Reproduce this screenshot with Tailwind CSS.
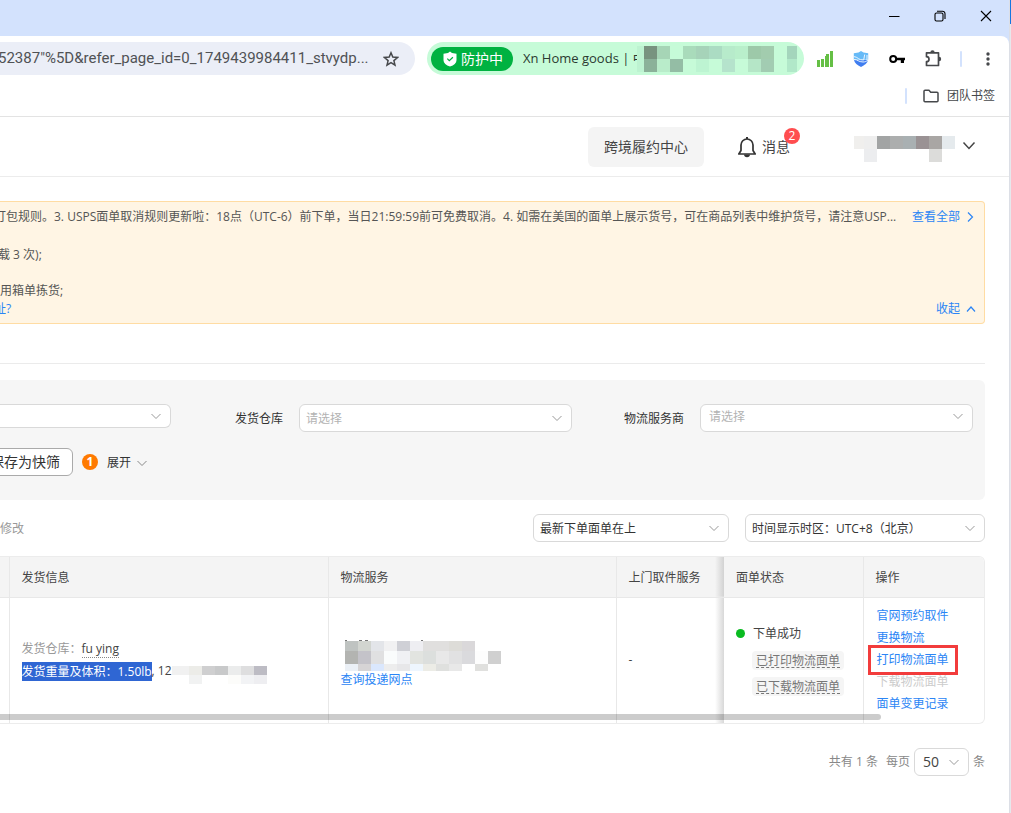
<!DOCTYPE html>
<html lang="zh-CN">
<head>
<meta charset="utf-8">
<meta name="viewport" content="width=device-width, initial-scale=1">
<title>物流面单管理</title>
<script src="https://cdn.jsdelivr.net/npm/@tailwindcss/browser@4"></script>
</head>
<body class="min-h-screen flex overflow-x-hidden bg-[#d3e2fd] text-xs text-[#444] font-['Open_Sans','Noto_Sans_CJK_SC',sans-serif]">

<div class="flex-1 min-w-0 flex flex-col overflow-hidden">
  <!-- Window title bar -->
  <div class="h-9 flex justify-end items-center pr-4 pb-1 gap-8 text-black">
    <button aria-label="最小化" class="w-3.5 h-3.5 flex items-center justify-center"><svg class="w-3 h-3" viewBox="0 0 12 12" stroke="currentColor"><path d="M1 6.500h10.500"/></svg></button>
    <button aria-label="还原" class="w-3.5 h-3.5"><svg class="w-3.5 h-3.5" viewBox="0 0 14 14" fill="none" stroke="currentColor" stroke-width="1.100"><rect x="2" y="4" width="8" height="8" rx="1.500"/><path d="M4 2.200h5.500a2.500 2.500 0 0 1 2.500 2.500V10"/></svg></button>
    <button aria-label="关闭" class="w-3.5 h-3.5"><svg class="w-3.5 h-3.5" viewBox="0 0 14 14" stroke="currentColor" stroke-width="1.100"><path d="M2 2l10 10M12 2L2 12"/></svg></button>
  </div>

  <div class="flex-1 bg-white rounded-tr-lg flex flex-col">
    <!-- Address bar -->
    <div class="flex items-center pt-1.5 pr-[13px]">
      <div class="flex-1 min-w-0 h-[33px] flex items-center bg-[#ebeef7] rounded-r-full pr-4">
        <input aria-label="地址栏" type="text" value="52387&quot;%5D&amp;refer_page_id=0_1749439984411_stvydp..." class="flex-1 min-w-0 -ml-0.5 bg-transparent font-[Roboto] text-[15px] text-[#505255] outline-none">
        <button aria-label="收藏" class="w-4 h-4"><svg class="w-4 h-4" viewBox="0 0 16 16" fill="none" stroke="#46484b" stroke-width="1.500"><path d="M8 1.800l1.800 4.300 4.700.4-3.600 3.100 1.100 4.600L8 11.700l-4 2.500 1.100-4.600L1.500 6.500l4.700-.4z"/></svg></button>
      </div>
      <div class="ml-3 h-[33px] w-[377px] flex items-center bg-[#c6fbd8] rounded-full pl-1">
        <span class="h-6 w-[82px] flex items-center pl-3 gap-1 rounded-full bg-[#00b241] text-white text-sm shrink-0">
          <svg class="w-3.5 h-4 shrink-0" viewBox="0 0 14 16"><path fill="#fff" d="M7 .5l2 1.500 4.500.8v6.400C13.500 12 11 14.200 7 15.600 3 14.200.5 12 .5 9.200V2.800L5 2z"/><path d="M4.300 7.600l2 2 3.600-3.400" fill="none" stroke="#00b241" stroke-width="1.200"/></svg>
          防护中</span>
        <span class="ml-2.5 w-[114px] overflow-hidden whitespace-nowrap text-[13px] text-[#2b3a30]">Xn Home goods | 中</span>
        <svg class="w-40 h-[26px] shrink-0" viewBox="0 0 160 26" shape-rendering="crispEdges">
          <path fill="#bdf3d1" d="M0 0h7v26H0z"/>
          <path fill="#78937f" d="M7 0h13v13H7z"/><path fill="#a6d5b6" d="M20 0h13v13H20z"/><path fill="#a9dbbb" d="M46 0h13v13H46z"/><path fill="#a6d3b9" d="M59 0h13v13H59z"/><path fill="#abdcc3" d="M72 0h13v13H72z"/><path fill="#b7ebcb" d="M85 0h13v13H85z"/><path fill="#b9efcb" d="M98 0h13v13H98z"/><path fill="#9dc9a9" d="M111 0h13v13h-13z"/><path fill="#a2ccae" d="M124 0h13v13h-13z"/><path fill="#a4d5bc" d="M150 0h10v13h-10z"/>
          <path fill="#8bb199" d="M7 13h13v13H7z"/><path fill="#b9ecca" d="M20 13h13v13H20z"/><path fill="#94bda5" d="M33 13h13v13H33z"/><path fill="#bdf4d2" d="M59 13h13v13H59z"/><path fill="#b5e3cc" d="M85 13h13v13H85z"/><path fill="#b5e6c7" d="M111 13h13v13h-13z"/><path fill="#a2ccb2" d="M124 13h13v13h-13z"/><path fill="#b1e8c9" d="M150 13h10v13h-10z"/>
        </svg>
      </div>
      <div class="ml-3 flex items-center gap-[18px]">
        <button aria-label="信号" class="w-[18px] h-[18px]"><svg class="w-[18px] h-[18px]" viewBox="0 0 18 18" fill="#65bf45"><path d="M1 10h3v7H1zM5 9h3v8H5zM9 6h2.500v11H9zM10 4h3v13h-3zM14 1h3v16h-3z"/></svg></button>
        <button aria-label="安全防护" class="w-[18px] h-[18px]"><svg class="w-[18px] h-[18px]" viewBox="0 0 18 18"><path fill="#66baf7" d="M9 1l2.500 1.600 4.700.6v6.500H1.800V3.200l4.700-.6z"/><path fill="#3f7df0" d="M2 10h14c-.7 3.200-3.200 5.200-7 7-3.800-1.800-6.300-3.800-7-7z"/><path d="M1.500 6.500c4.500.2 5 4 10.200 3.500l1-5.500M2 9.500c3.500-.2 4.500 2.500 9 2.500 2.200 0 3.500-.7 5-2M15 5v5" fill="none" stroke="#e9f5ff" stroke-width="1"/></svg></button>
        <button aria-label="密码" class="w-[18px] h-[18px]"><svg class="w-[18px] h-[18px]" viewBox="0 0 18 18"><circle cx="5.200" cy="9" r="3" fill="none" stroke="#000" stroke-width="2"/><path fill="#000" d="M8.500 7.700H17v2.600h-1V13h-3.200v-2.700H8.500z"/></svg></button>
        <button aria-label="扩展程序" class="w-[18px] h-[18px]"><svg class="w-[18px] h-[18px]" viewBox="0 0 18 18"><path fill="none" stroke="#46484b" stroke-width="1.700" stroke-linejoin="round" d="M2.500 2.800h12v12.700h-12v-3.800a2.500 2.500 0 0 0 0-5z"/><path fill="#46484b" d="M6.300 2.500a2.200 2.200 0 0 1 4.400 0zM15 6.800a2.200 2.200 0 0 1 0 4.400z"/></svg></button>
        <span class="w-0.5 h-4 bg-[#d3e2fd] rounded"></span>
        <button aria-label="菜单" class="w-4 h-4"><svg class="w-4 h-4" viewBox="0 0 16 16" fill="#46484b"><circle cx="8" cy="3" r="1.700"/><circle cx="8" cy="8" r="1.700"/><circle cx="8" cy="13" r="1.700"/></svg></button>
      </div>
    </div>

    <!-- Bookmarks bar -->
    <div class="h-[42px] border-b border-[#e3e3e3] flex items-center justify-end pr-3.5">
      <span class="w-0.5 h-4 bg-[#d3e2fd] rounded mr-4"></span>
      <a href="#" class="flex items-center gap-2 text-[#46484b]">
        <svg class="w-4 h-4" viewBox="0 0 16 16" fill="none" stroke="currentColor" stroke-width="1.500" stroke-linejoin="round"><path d="M1 12.800V3.200q0-1 1-1h4l1.700 2H14q1 0 1 1v7.600q0 1-1 1H2q-1 0-1-1z"/></svg>
        团队书签</a>
    </div>

    <!-- Site header -->
    <header class="h-[60px] border-b border-[#ececec] flex items-center justify-end pr-8 text-sm">
      <button class="h-10 px-4 rounded-md bg-[#f4f4f4] text-[#444]">跨境履约中心</button>
      <button class="relative ml-8 flex items-center gap-1 text-[#444]">
        <svg class="w-[22px] h-[22px]" viewBox="0 0 22 22" fill="none" stroke="#333" stroke-width="1.700" stroke-linejoin="round"><path d="M11 3a6 6 0 0 0-6 6v5.500L2.800 18h16.400L17 14.500V9a6 6 0 0 0-6-6z"/><path d="M11 1v2" stroke-width="2"/><path d="M8 18.500h6c0 1.500-1.200 2.700-3 2.700s-3-1.200-3-2.700z" fill="#333" stroke="none"/></svg>
        消息
        <span class="absolute -top-2 -right-2.5 w-4 h-4 rounded-full bg-[#ff4d4f] text-white text-xs leading-4 text-center">2</span>
      </button>
      <button aria-label="账号菜单" class="ml-16 flex items-center gap-1.5">
        <svg class="w-[101px] h-[26px] translate-y-0.5" viewBox="0 0 101 26" shape-rendering="crispEdges">
          <path fill="#f0efed" d="M0 0h10v13H0z"/><path fill="#eee" d="M10 0h13v13H10z"/><path fill="#a2a4a4" d="M23 0h13v13H23z"/><path fill="#acaeae" d="M36 0h13v13H36z"/><path fill="#a9b0b2" d="M49 0h13v13H49z"/><path fill="#9a9294" d="M62 0h13v13H62z"/><path fill="#a9a6a4" d="M75 0h13v13H75z"/><path fill="#e5eaed" d="M88 0h13v13H88z"/><path fill="#ecedef" d="M10 13h13v13H10z"/><path fill="#dcdcda" d="M75 13h13v13H75z"/>
        </svg>
        <svg class="w-4 h-4" viewBox="0 0 16 16" fill="none" stroke="#444" stroke-width="1.500"><path d="M2.500 3.500L8 9.500l5.500-6"/></svg>
      </button>
    </header>

    <main class="pr-6 pt-6">
      <!-- Notice -->
      <section class="border border-l-0 border-[#ffdca3] bg-[#fff5e4] rounded-r pt-1.5 pb-[5px] pr-2 text-[#555] leading-[18px]">
        <div class="flex items-center whitespace-nowrap pb-0.5">
          <p class="flex-1 min-w-0 overflow-hidden"><span class="block -ml-1.5">打包规则。3. USPS面单取消规则更新啦：18点（UTC-6）前下单，当日21:59:59前可免费取消。4. 如需在美国的面单上展示货号，可在商品列表中维护货号，请注意USP...</span></p>
          <a href="#" class="ml-3 flex items-center gap-1 text-[#2b85f5]">查看全部
            <svg class="w-3 h-3" viewBox="0 0 12 12" fill="none" stroke="currentColor" stroke-width="1.200"><path d="M4 1.500L8.500 6 4 10.500"/></svg></a>
        </div>
        <p class="mt-[18px] -ml-0.5">载 3 次);</p>
        <p class="mt-[18px]">用箱单拣货;</p>
        <div class="flex justify-between">
          <a href="#" class="-ml-1.5 text-[#2b85f5]">址?</a>
          <button class="flex items-center gap-1.5 text-[#2b85f5]">收起
            <svg class="w-2.5 h-2.5" viewBox="0 0 10 10" fill="none" stroke="currentColor" stroke-width="1.200"><path d="M1 7.500l4-4.500 4 4.500"/></svg></button>
        </div>
      </section>

      <div class="mt-[39px] h-px bg-[#ebebeb]"></div>

      <!-- Filters -->
      <form class="mt-4 bg-[#f6f6f6] rounded-r-md py-6 pr-3">
        <div class="grid grid-cols-[171px_1fr_1fr] items-start text-[#333]">
          <div class="relative">
            <select aria-label="筛选条件" class="appearance-none block w-full h-6 rounded-r-md border border-l-0 border-[#d9d9d9] bg-white"><option></option></select>
            <svg class="pointer-events-none absolute right-2.5 top-1.5 w-2.5 h-3" viewBox="0 0 10 12" fill="none" stroke="#999"><path d="M.5 4L5 8.500 9.500 4"/></svg>
          </div>
          <div class="flex items-center">
            <label for="warehouse" class="w-32 pr-4 pt-0.5 text-right">发货仓库</label>
            <div class="relative flex-1">
              <select id="warehouse" class="appearance-none block w-full h-7 px-1.5 pt-0.5 rounded-md border border-[#d9d9d9] bg-white text-[#b3b3b3]"><option>请选择</option></select>
              <svg class="pointer-events-none absolute right-2.5 top-2 w-2.5 h-3" viewBox="0 0 10 12" fill="none" stroke="#999"><path d="M.5 4L5 8.500 9.500 4"/></svg>
            </div>
          </div>
          <div class="flex items-center">
            <label for="carrier" class="w-32 pr-4 pt-0.5 text-right">物流服务商</label>
            <div class="relative flex-1">
              <select id="carrier" class="appearance-none block w-full h-7 px-2 pb-0.5 rounded-md border border-[#d9d9d9] bg-white text-[#b3b3b3]"><option>请选择</option></select>
              <svg class="pointer-events-none absolute right-2.5 top-1.5 w-2.5 h-3" viewBox="0 0 10 12" fill="none" stroke="#999"><path d="M.5 4L5 8.500 9.500 4"/></svg>
            </div>
          </div>
        </div>
        <div class="mt-4 flex items-center text-[#333]">
          <div class="w-[73px] flex justify-end overflow-hidden shrink-0">
            <button type="button" class="h-7 px-3 shrink-0 rounded-md border border-[#aaa] bg-white text-sm whitespace-nowrap">保存为快筛</button>
          </div>
          <span class="ml-[9px] w-4 h-4 rounded-full bg-[#ff7a00] text-white text-xs leading-4 font-bold text-center">1</span>
          <button type="button" class="ml-[9px] pt-0.5 flex items-center gap-1.5">展开
            <svg class="w-2.5 h-3" viewBox="0 0 10 12" fill="none" stroke="#888"><path d="M.5 4L5 8.500 9.500 4"/></svg></button>
        </div>
      </form>

      <!-- List toolbar -->
      <div class="mt-3.5 flex items-center gap-4 text-[#333]">
        <span class="mr-auto pt-0.5 text-[#999]">修改</span>
        <div class="relative w-[196px]">
          <select aria-label="排序" class="appearance-none block w-full h-7 px-1.5 pt-0.5 rounded-md border border-[#d9d9d9] bg-white"><option>最新下单面单在上</option></select>
          <svg class="pointer-events-none absolute right-2.5 top-2 w-2.5 h-3" viewBox="0 0 10 12" fill="none" stroke="#999"><path d="M.5 4L5 8.500 9.500 4"/></svg>
        </div>
        <div class="relative w-60">
          <select aria-label="时区" class="appearance-none block w-full h-7 px-1.5 pt-0.5 rounded-md border border-[#d9d9d9] bg-white"><option>时间显示时区：UTC+8（北京）</option></select>
          <svg class="pointer-events-none absolute right-2.5 top-2 w-2.5 h-3" viewBox="0 0 10 12" fill="none" stroke="#999"><path d="M.5 4L5 8.500 9.500 4"/></svg>
        </div>
      </div>

      <!-- Orders -->
      <div class="relative mt-3.5 border border-l-0 border-[#ececec] rounded-r-md overflow-hidden">
        <table class="w-full table-fixed border-collapse text-left">
          <colgroup><col class="w-[9px]"><col class="w-[319px]"><col><col class="w-[108px]"><col class="w-[139px]"><col class="w-[121px]"></colgroup>
          <thead>
            <tr class="h-10 bg-[#f4f4f4] border-b border-[#e8e8e8] text-[#444]">
              <td class="border-r border-[#e8e8e8]"></td>
              <th class="px-3 pt-0.5 font-normal border-r border-[#e8e8e8]">发货信息</th>
              <th class="px-3 pt-0.5 font-normal border-r border-[#e8e8e8]">物流服务</th>
              <th class="px-3 pt-0.5 font-normal bg-linear-to-l from-[#d2d2d2] to-transparent bg-[length:9px_100%] bg-right bg-no-repeat">上门取件服务</th>
              <th class="px-3 pt-0.5 font-normal border-r border-[#e8e8e8]">面单状态</th>
              <th class="px-3 pt-0.5 font-normal">操作</th>
            </tr>
          </thead>
          <tbody>
            <tr class="h-[126px]">
              <td class="border-r border-[#e8e8e8]"></td>
              <td class="px-3 border-r border-[#e8e8e8] leading-[22px]">
                <div class="text-[#999]">发货仓库：<span class="text-[#444] border-b border-dotted border-[#888]">fu ying</span></div>
                <div class="flex items-center whitespace-nowrap"><span class="bg-[#2f66d3] text-white leading-[19px]">发货重量及体积：1.50lb</span><span>, 12</span>
                  <svg class="w-[95px] h-[18px] translate-y-1" viewBox="0 0 95 18" shape-rendering="crispEdges">
                    <path fill="#f1f1f1" d="M0 0h17v9H0z"/><path fill="#ecece8" d="M17 0h13v9H17z"/><path fill="#cfcfd0" d="M30 0h13v9H30z"/><path fill="#c8c9ca" d="M43 0h13v9H43z"/><path fill="#ebecec" d="M56 0h13v9H56z"/><path fill="#dededf" d="M69 0h13v9H69z"/><path fill="#bdbcc4" d="M82 0h13v9H82z"/><path fill="#f1f2f2" d="M17 9h13v9H17z"/><path fill="#fcfcfa" d="M56 9h13v9H56z"/><path fill="#f2f3f5" d="M69 9h13v9H69z"/><path fill="#eeeef1" d="M82 9h13v9H82z"/>
                  </svg>
                </div>
              </td>
              <td class="px-3 pt-2 border-r border-[#e8e8e8]">
                <svg class="ml-1 w-[156px] h-[31px]" viewBox="0 0 156 31" shape-rendering="crispEdges">
                  <path fill="#777" d="M0 0h2v1H0zM14 0h3v1h-3zM20 0h3v1h-3zM76 0h2v1h-2z"/>
                  <path fill="#bfc3c1" d="M0 1h13v10H0z"/><path fill="#d2d5d0" d="M13 1h13v10H13z"/><path fill="#e3e5e9" d="M26 1h13v10H26z"/><path fill="#f1f1f2" d="M39 1h13v10H39z"/><path fill="#cfd0d6" d="M52 1h13v10H52z"/><path fill="#eeeef2" d="M65 1h13v10H65z"/><path fill="#e0dfde" d="M78 1h26v10H78z"/><path fill="#dddcd8" d="M104 1h13v10h-13z"/><path fill="#dad8da" d="M117 1h13v10h-13z"/>
                  <path fill="#b3b4b1" d="M0 11h13v13H0z"/><path fill="#c4c3c9" d="M13 11h13v13H13z"/><path fill="#e0e0e1" d="M26 11h13v13H26z"/><path fill="#fafcfc" d="M39 11h13v13H39z"/><path fill="#f0f1f4" d="M52 11h13v13H52z"/><path fill="#e2e4e0" d="M65 11h13v13H65z"/><path fill="#dcdfdd" d="M78 11h13v13H78z"/><path fill="#e8e8e8" d="M91 11h13v13H91z"/><path fill="#e1e1e2" d="M104 11h13v13h-13z"/><path fill="#dadadd" d="M117 11h13v13h-13z"/><path fill="#fdfdfd" d="M130 11h13v13h-13z"/><path fill="#d0d0d0" d="M143 11h13v13h-13z"/>
                  <path fill="#ebf0f6" d="M0 24h13v7H0z"/><path fill="#d6d4d5" d="M13 24h13v7H13z"/><path fill="#dae7fd" d="M26 24h13v7H26z"/><path fill="#ededed" d="M39 24h13v7H39z"/><path fill="#e7e7e9" d="M52 24h13v7H52z"/><path fill="#eef6fe" d="M65 24h13v7H65z"/><path fill="#ecece6" d="M78 24h13v7H78z"/><path fill="#dfe0de" d="M91 24h13v7H91z"/><path fill="#e8e8e8" d="M104 24h13v7h-13z"/><path fill="#e0e0de" d="M130 24h13v7h-13z"/>
                </svg>
                <a href="#" class="text-[#2b85f5] leading-[18px]">查询投递网点</a>
              </td>
              <td class="px-3 bg-linear-to-l from-[#d8d8d8] to-transparent bg-[length:9px_100%] bg-right bg-no-repeat">-</td>
              <td class="px-3 border-r border-[#e8e8e8]">
                <div class="flex items-center gap-2 leading-[18px]"><span class="w-[9px] h-[9px] rounded-full bg-[#09bb20]"></span>下单成功</div>
                <div class="ml-4 mt-2 flex flex-col items-start gap-[7px] text-[#777]">
                  <span class="px-1 bg-[#f5f5f5] rounded leading-[19px]"><span class="underline decoration-dashed underline-offset-2">已打印物流面单</span></span>
                  <span class="px-1 bg-[#f5f5f5] rounded leading-[19px]"><span class="underline decoration-dashed underline-offset-2">已下载物流面单</span></span>
                </div>
              </td>
              <td class="pl-[13px]">
                <div class="flex flex-col items-start leading-[22px] whitespace-nowrap text-[#2b85f5]">
                  <a href="#">官网预约取件</a>
                  <a href="#">更换物流</a>
                  <a href="#" class="relative">打印物流面单<span class="absolute -inset-x-[9px] -inset-y-1 border-3 border-[#f23c3c]"></span></a>
                  <button disabled class="text-[#ccc]">下载物流面单</button>
                  <a href="#">面单变更记录</a>
                </div>
              </td>
            </tr>
          </tbody>
        </table>
        <div class="absolute bottom-[3px] left-0 right-[103px] h-1.5 rounded-r-full bg-black/20"></div>
      </div>

      <!-- Pagination -->
      <div class="mt-6 mb-9 flex items-center justify-end text-[#888]">
        <span class="mr-2">共有 1 条</span>
        <label for="page-size">每页</label>
        <div class="relative mx-1 w-[55px]">
          <select id="page-size" class="appearance-none block w-full h-7 px-2 rounded-md border border-[#d9d9d9] bg-white text-sm text-[#444]"><option>50</option></select>
          <svg class="pointer-events-none absolute right-2.5 top-2 w-2.5 h-3" viewBox="0 0 10 12" fill="none" stroke="#999"><path d="M.5 4L5 8.500 9.500 4"/></svg>
        </div>
        <span>条</span>
      </div>
    </main>
  </div>
</div>

<!-- Sliver of the window behind -->
<div class="w-0.5 flex flex-col shrink-0 bg-[#e6e8ec] border-l border-[#dcdfe6]">
  <div class="h-6 bg-[#1677e0]"></div>
</div>
</body>
</html>
